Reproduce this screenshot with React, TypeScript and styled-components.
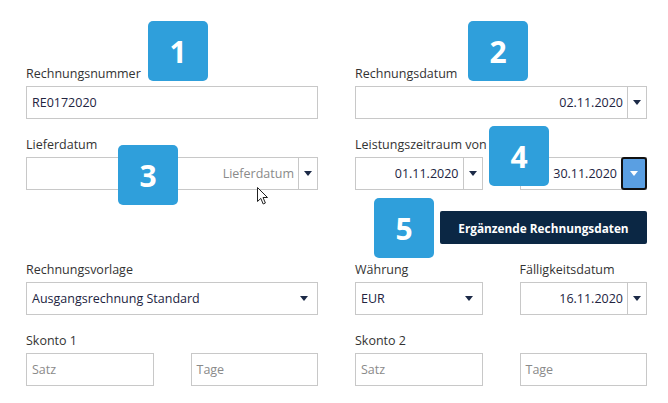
import React from "react";
import styled, { createGlobalStyle } from "styled-components";

const Global = createGlobalStyle`
  html, body { margin: 0; padding: 0; background: #fff; }
  body { font-family: "Open Sans", "Liberation Sans", sans-serif; }
  * { box-sizing: border-box; }
`;

const Page = styled.div`
  position: relative;
  width: 668px;
  height: 403px;
  overflow: hidden;
  padding: 65px 0 0 26px;
`;

const Form = styled.div`
  width: 621px;
  display: grid;
  grid-template-columns: repeat(4, minmax(0, 1fr));
  column-gap: 37px;
  row-gap: 17px;
`;

const Field = styled.div<{ $span?: number }>`
  display: flex;
  flex-direction: column;
  min-width: 0;
  grid-column: span ${(p) => p.$span ?? 1};
`;

const Label = styled.div`
  height: 18px;
  line-height: 18px;
  margin-bottom: 3px;
  font-size: 12.5px;
  color: #333;
  white-space: nowrap;
`;

const Box = styled.div`
  display: flex;
  align-items: stretch;
  height: 33px;
  border: 1px solid #c8c8c8;
  background: #fff;
`;

const Value = styled.div<{ $right?: boolean; $placeholder?: boolean }>`
  flex: 1;
  display: flex;
  align-items: center;
  justify-content: ${(p) => (p.$right ? "flex-end" : "flex-start")};
  padding: ${(p) => (p.$right ? "0 4px 0 0" : "0 0 0 5px")};
  font-size: 12.5px;
  color: ${(p) => (p.$placeholder ? "#8a8a8a" : "#22243f")};
  white-space: nowrap;
`;

const DropButton = styled.div<{ $sep?: boolean; $focused?: boolean }>`
  width: ${(p) => (p.$sep ? "19px" : "26px")};
  display: flex;
  align-items: center;
  justify-content: center;
  border-left: ${(p) => (p.$sep ? "1px solid #c8c8c8" : "none")};
  ${(p) =>
    p.$focused &&
    `
    margin: -1px -1px -1px 0;
    border: 2px solid #111;
    border-radius: 3px;
    background: #5a9fe2;
  `}
`;

const Tri = styled.span<{ $light?: boolean }>`
  width: 0;
  height: 0;
  border-left: 4.5px solid transparent;
  border-right: 4.5px solid transparent;
  border-top: 5px solid ${(p) => (p.$light ? "#fff" : "#1c2a47")};
`;

const ActionCell = styled.div`
  grid-column: 3 / span 2;
  display: flex;
  justify-content: flex-end;
  margin-top: 4px;
`;

const ActionButton = styled.button`
  width: 207px;
  height: 33px;
  border: none;
  border-radius: 2px;
  background: #0b2744;
  color: #fff;
  font-family: "Open Sans", "Liberation Sans", sans-serif;
  font-weight: 700;
  font-size: 11.8px;
  padding: 0;
`;

const Spacer = styled.div<{ $span: number }>`
  grid-column: span ${(p) => p.$span};
`;

const Badge = styled.div<{ $x: number; $y: number }>`
  position: absolute;
  left: ${(p) => p.$x}px;
  top: ${(p) => p.$y}px;
  width: 60px;
  height: 60px;
  border-radius: 5px;
  background: #2f9fdb;
  color: #fff;
  font-weight: 700;
  font-size: 30px;
  display: flex;
  align-items: center;
  justify-content: center;
`;

const Cursor = styled.svg`
  position: absolute;
  left: 256px;
  top: 186px;
`;

type DateProps = { value?: string; placeholder?: string; focused?: boolean };
const DateInput = ({ value, placeholder, focused }: DateProps) => (
  <Box>
    <Value $right $placeholder={!value}>{value ?? placeholder}</Value>
    <DropButton $sep={!focused} $focused={focused}>
      <Tri $light={focused} />
    </DropButton>
  </Box>
);

const Select = ({ value }: { value: string }) => (
  <Box>
    <Value>{value}</Value>
    <DropButton>
      <Tri />
    </DropButton>
  </Box>
);

const TextInput = ({ value, placeholder }: { value?: string; placeholder?: string }) => (
  <Box>
    <Value $placeholder={!value}>{value ?? placeholder}</Value>
  </Box>
);

export default function App() {
  return (
    <>
      <Global />
      <Page>
        <Form>
          <Field $span={2}>
            <Label>Rechnungsnummer</Label>
            <TextInput value="RE0172020" />
          </Field>
          <Field $span={2}>
            <Label>Rechnungsdatum</Label>
            <DateInput value="02.11.2020" />
          </Field>

          <Field $span={2}>
            <Label>Lieferdatum</Label>
            <DateInput placeholder="Lieferdatum" />
          </Field>
          <Field>
            <Label>Leistungszeitraum von</Label>
            <DateInput value="01.11.2020" />
          </Field>
          <Field>
            <Label>&nbsp;</Label>
            <DateInput value="30.11.2020" focused />
          </Field>

          <Spacer $span={2} />
          <ActionCell>
            <ActionButton>Ergänzende Rechnungsdaten</ActionButton>
          </ActionCell>

          <Field $span={2}>
            <Label>Rechnungsvorlage</Label>
            <Select value="Ausgangsrechnung Standard" />
          </Field>
          <Field>
            <Label>Währung</Label>
            <Select value="EUR" />
          </Field>
          <Field>
            <Label>Fälligkeitsdatum</Label>
            <DateInput value="16.11.2020" />
          </Field>

          <Field>
            <Label>Skonto 1</Label>
            <TextInput placeholder="Satz" />
          </Field>
          <Field>
            <Label>&nbsp;</Label>
            <TextInput placeholder="Tage" />
          </Field>
          <Field>
            <Label>Skonto 2</Label>
            <TextInput placeholder="Satz" />
          </Field>
          <Field>
            <Label>&nbsp;</Label>
            <TextInput placeholder="Tage" />
          </Field>
        </Form>

        <Badge $x={148} $y={21}>1</Badge>
        <Badge $x={468} $y={21}>2</Badge>
        <Badge $x={118} $y={145}>3</Badge>
        <Badge $x={489} $y={126}>4</Badge>
        <Badge $x={374} $y={198}>5</Badge>

        <Cursor width="14" height="20" viewBox="0 0 14 20">
          <path
            d="M1.5 1.5 L1.5 15.5 L4.8 12.4 L7.2 18 L9.4 17 L7 11.5 L11.5 11.5 Z"
            fill="#fff"
            stroke="#222"
            strokeWidth="1"
            strokeLinejoin="round"
          />
        </Cursor>
      </Page>
    </>
  );
}
